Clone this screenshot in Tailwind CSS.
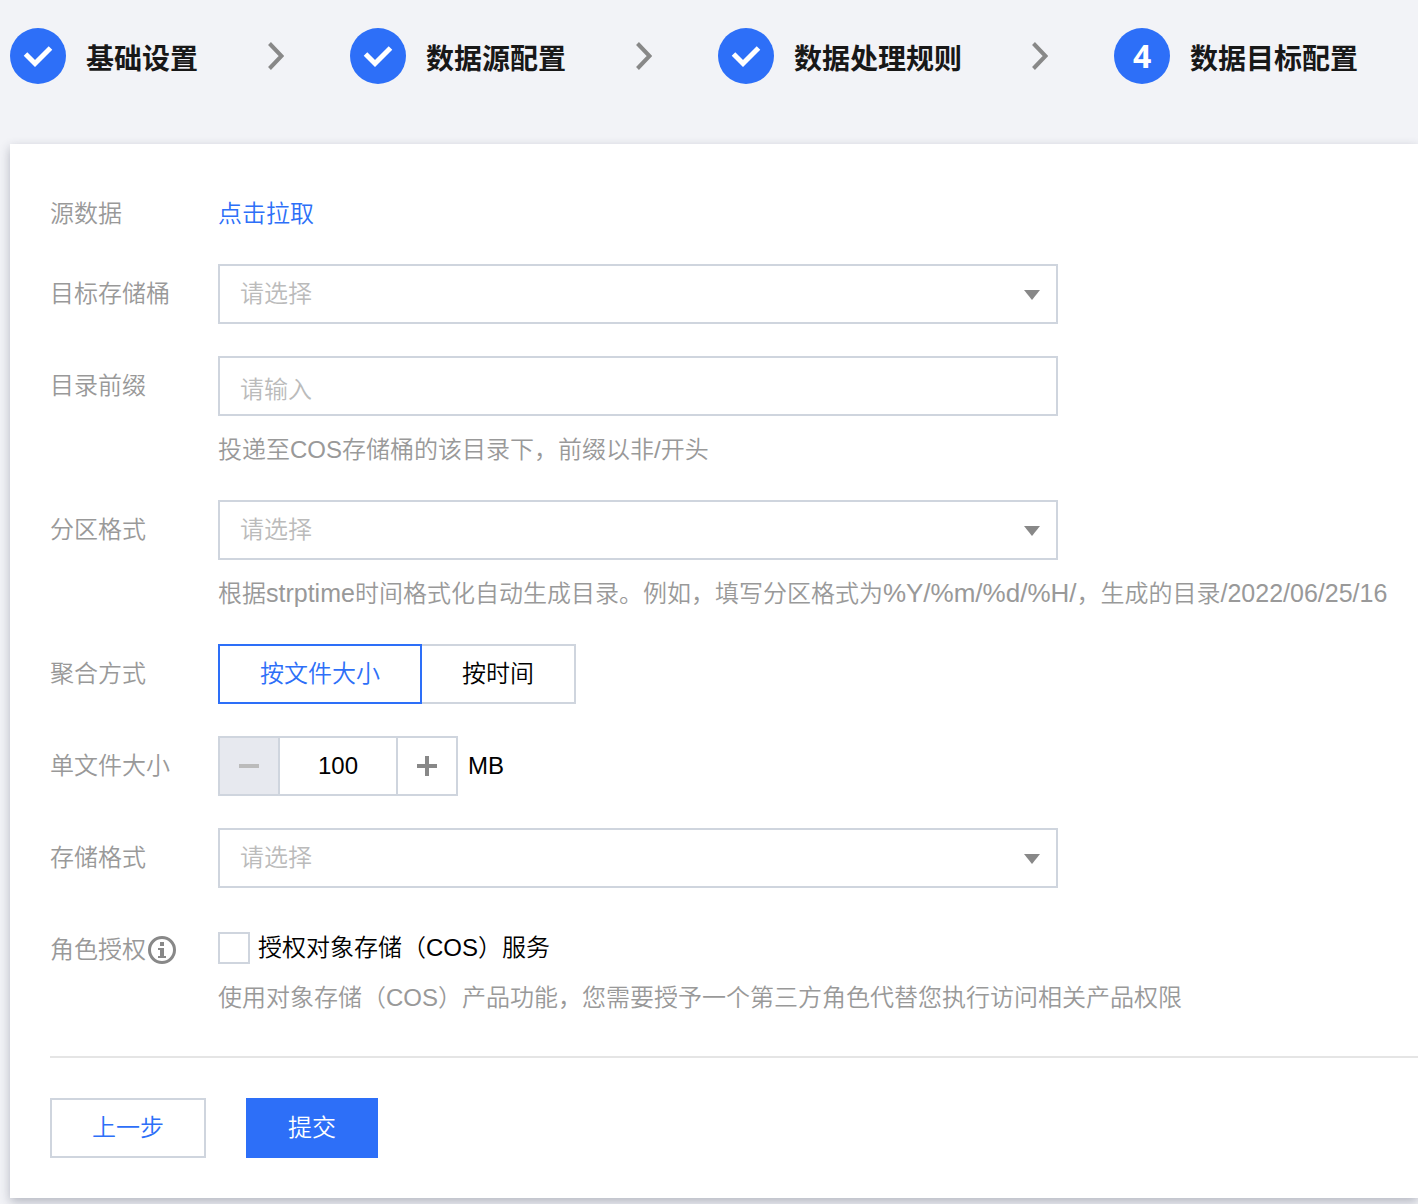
<!DOCTYPE html>
<html lang="zh-CN">
<head>
    <meta charset="UTF-8">
    <meta name="viewport" content="width=device-width, initial-scale=1.0">
    <script src="https://cdn.jsdelivr.net/npm/@tailwindcss/browser@4"></script>
    <title>数据目标配置</title>
</head>
<body class="min-h-screen overflow-x-hidden bg-[#f2f3f7] pb-1.5 font-['Liberation_Sans','Noto_Sans_CJK_SC',sans-serif] font-[350] text-2xl leading-9 text-black">
    <!-- Steps -->
    <ol class="flex items-center pl-2.5 pt-7 pb-15 text-[28px] font-bold text-[#181818] whitespace-nowrap">
        <li class="flex items-center">
            <span class="flex size-14 items-center justify-center rounded-full bg-[#2d6ff8]">
                <svg class="size-14" viewBox="0 0 56 56" fill="none" stroke="white" stroke-width="5"><path d="M15.5 26 25 35.5 40.500 20"/></svg>
            </span>
            <span class="ml-5 pt-2">基础设置</span>
            <svg class="ml-[70px] mr-[66px] w-4 h-7" viewBox="0 0 16 28" fill="none" stroke="#888" stroke-width="4"><path d="M1.500 1.500 13.500 14 1.500 26.500"/></svg>
        </li>
        <li class="flex items-center">
            <span class="flex size-14 items-center justify-center rounded-full bg-[#2d6ff8]">
                <svg class="size-14" viewBox="0 0 56 56" fill="none" stroke="white" stroke-width="5"><path d="M15.5 26 25 35.5 40.500 20"/></svg>
            </span>
            <span class="ml-5 pt-2">数据源配置</span>
            <svg class="ml-[70px] mr-[66px] w-4 h-7" viewBox="0 0 16 28" fill="none" stroke="#888" stroke-width="4"><path d="M1.500 1.500 13.500 14 1.500 26.500"/></svg>
        </li>
        <li class="flex items-center">
            <span class="flex size-14 items-center justify-center rounded-full bg-[#2d6ff8]">
                <svg class="size-14" viewBox="0 0 56 56" fill="none" stroke="white" stroke-width="5"><path d="M15.5 26 25 35.5 40.500 20"/></svg>
            </span>
            <span class="ml-5 pt-2">数据处理规则</span>
            <svg class="ml-[70px] mr-[66px] w-4 h-7" viewBox="0 0 16 28" fill="none" stroke="#888" stroke-width="4"><path d="M1.500 1.500 13.500 14 1.500 26.500"/></svg>
        </li>
        <li class="flex items-center" aria-current="step">
            <span class="flex size-14 items-center justify-center rounded-full bg-[#2d6ff8] font-['Open_Sans',sans-serif] text-[32px] text-white">4</span>
            <span class="ml-5 pt-2">数据目标配置</span>
        </li>
    </ol>

    <!-- Form -->
    <form class="ml-2.5 bg-white pl-10 pt-13 pb-10 shadow-[0_4px_10px_rgba(54,58,80,0.32)]">
        <div class="flex flex-col gap-8">
            <div class="flex">
                <span class="w-42 shrink-0 text-[#999]">源数据</span>
                <a href="#" class="text-[#2d6ff8]">点击拉取</a>
            </div>

            <div class="flex">
                <label for="bucket" class="w-42 shrink-0 pt-3 text-[#999]">目标存储桶</label>
                <div class="relative w-full max-w-[840px]">
                    <select id="bucket" class="block h-15 w-full appearance-none rounded-none border-2 border-[#cfd5de] bg-white px-5 text-[#bbb]">
                        <option>请选择</option>
                    </select>
                    <svg class="pointer-events-none absolute right-4.5 top-6.5 h-2.5 w-4" viewBox="0 0 16 10" fill="#888"><path d="M0 0h16L8 10z"/></svg>
                </div>
            </div>

            <div class="flex">
                <label for="prefix" class="w-42 shrink-0 pt-3 text-[#999]">目录前缀</label>
                <div class="w-full">
                    <input id="prefix" type="text" placeholder="请输入" class="block h-15 w-full max-w-[840px] border-2 border-[#cfd5de] px-5 pt-2 placeholder:text-[#bbb]">
                    <p class="mt-4 text-[#999]">投递至COS存储桶的该目录下，前缀以非/开头</p>
                </div>
            </div>

            <div class="flex">
                <label for="partition" class="w-42 shrink-0 pt-3 text-[#999]">分区格式</label>
                <div class="w-full">
                    <div class="relative max-w-[840px]">
                        <select id="partition" class="block h-15 w-full appearance-none rounded-none border-2 border-[#cfd5de] bg-white px-5 text-[#bbb]">
                            <option>请选择</option>
                        </select>
                        <svg class="pointer-events-none absolute right-4.5 top-6.5 h-2.5 w-4" viewBox="0 0 16 10" fill="#888"><path d="M0 0h16L8 10z"/></svg>
                    </div>
                    <p class="mt-4 text-[#999]">根据<span class="text-[25px] leading-none">strptime</span>时间格式化自动生成目录。例如，填写分区格式为<span class="text-[26px] leading-none">%Y/%m/%d/%H/</span>，生成的目录<span class="text-[25px] leading-none">/2022/06/25/16</span></p>
                </div>
            </div>

            <div class="flex">
                <span class="w-42 shrink-0 pt-3 text-[#999]">聚合方式</span>
                <div class="flex h-15" role="group" aria-label="聚合方式">
                    <button type="button" aria-pressed="true" class="border-2 border-[#2d6ff8] px-10 text-[#2d6ff8]">按文件大小</button>
                    <button type="button" aria-pressed="false" class="border-2 border-l-0 border-[#cfd5de] px-10">按时间</button>
                </div>
            </div>

            <div class="flex">
                <label for="size" class="w-42 shrink-0 pt-3 text-[#999]">单文件大小</label>
                <div class="flex items-center">
                    <div class="flex h-15 border-2 border-[#cfd5de]">
                        <button type="button" aria-label="减少" disabled class="flex w-[58px] items-center justify-center bg-[#e7e9ef]">
                            <svg class="size-5" viewBox="0 0 20 20" fill="#bbb"><path d="M0 8h20v4H0z"/></svg>
                        </button>
                        <input id="size" type="text" value="100" class="w-30 border-x-2 border-[#cfd5de] text-center">
                        <button type="button" aria-label="增加" class="flex w-[58px] items-center justify-center">
                            <svg class="size-5" viewBox="0 0 20 20" fill="#888"><path d="M0 8h8V0h4v8h8v4h-8v8H8v-8H0z"/></svg>
                        </button>
                    </div>
                    <span class="ml-2.5">MB</span>
                </div>
            </div>

            <div class="flex">
                <label for="format" class="w-42 shrink-0 pt-3 text-[#999]">存储格式</label>
                <div class="relative w-full max-w-[840px]">
                    <select id="format" class="block h-15 w-full appearance-none rounded-none border-2 border-[#cfd5de] bg-white px-5 text-[#bbb]">
                        <option>请选择</option>
                    </select>
                    <svg class="pointer-events-none absolute right-4.5 top-6.5 h-2.5 w-4" viewBox="0 0 16 10" fill="#888"><path d="M0 0h16L8 10z"/></svg>
                </div>
            </div>

            <div class="flex">
                <div class="flex h-15 w-42 shrink-0 items-center text-[#999]">
                    角色授权
                    <svg class="ml-0.5 size-7" viewBox="0 0 28 28" fill="#888"><circle cx="14" cy="14" r="12.500" fill="none" stroke="#888" stroke-width="3"/><path d="M12 6h4v4h-4zM10 12h6v8h2v2h-8v-2h2v-6h-2z"/></svg>
                </div>
                <div class="pt-2.5">
                    <label class="flex items-center">
                        <input type="checkbox" class="mr-2 size-8 appearance-none border-2 border-[#cfd5de] checked:bg-[#2d6ff8]">
                        授权对象存储（COS）服务
                    </label>
                    <p class="mt-3.5 text-[#999]">使用对象存储（COS）产品功能，您需要授予一个第三方角色代替您执行访问相关产品权限</p>
                </div>
            </div>
        </div>

        <div class="mt-10 flex gap-10 border-t-2 border-[#e5e5e5] pt-10">
            <button type="button" class="h-15 border-2 border-[#cfd5de] px-10 text-[#2d6ff8]">上一步</button>
            <button type="submit" class="h-15 bg-[#2d6ff8] px-10.5 text-white">提交</button>
        </div>
    </form>
</body>
</html>
